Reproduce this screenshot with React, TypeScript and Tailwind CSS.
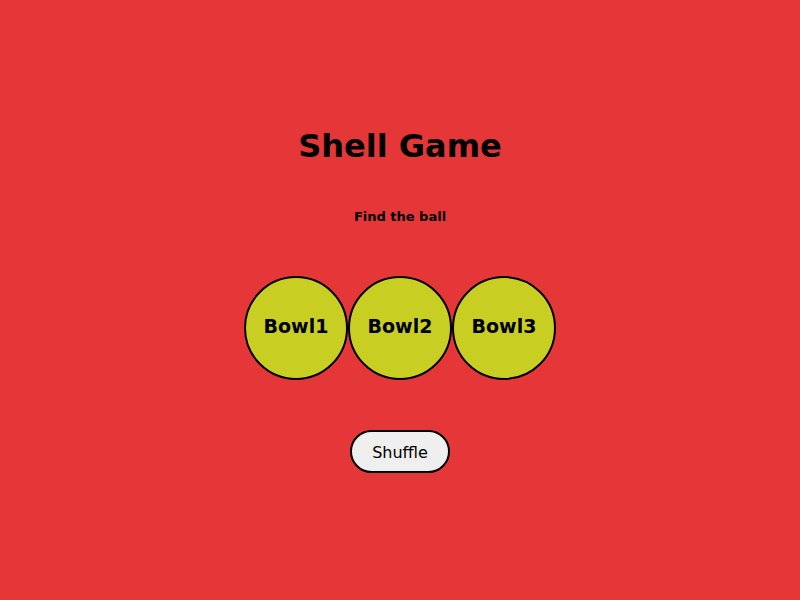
export default function App() {
  const bowls = ["Bowl1", "Bowl2", "Bowl3"];
  return (
    <div className="flex min-h-[600px] w-full flex-col items-center bg-[#e53737] font-['DejaVu_Sans',sans-serif] text-black">
      <h1 className="mt-[128px] text-[32px] font-bold leading-[37px]">Shell Game</h1>
      <p className="mt-[44px] text-[13px] font-bold leading-[15px]">Find the ball</p>
      <div className="mt-[52px] flex">
        {bowls.map((b) => (
          <div
            key={b}
            className="flex h-[104px] w-[104px] items-center justify-center rounded-full border-2 border-black bg-[#c8cf22] pb-1 text-[19px] font-bold"
          >
            {b}
          </div>
        ))}
      </div>
      <button className="mt-[50px] h-[43px] w-[100px] rounded-full border-2 border-black bg-[#efefef] pt-[3px] text-[16px]">
        Shuffle
      </button>
    </div>
  );
}
